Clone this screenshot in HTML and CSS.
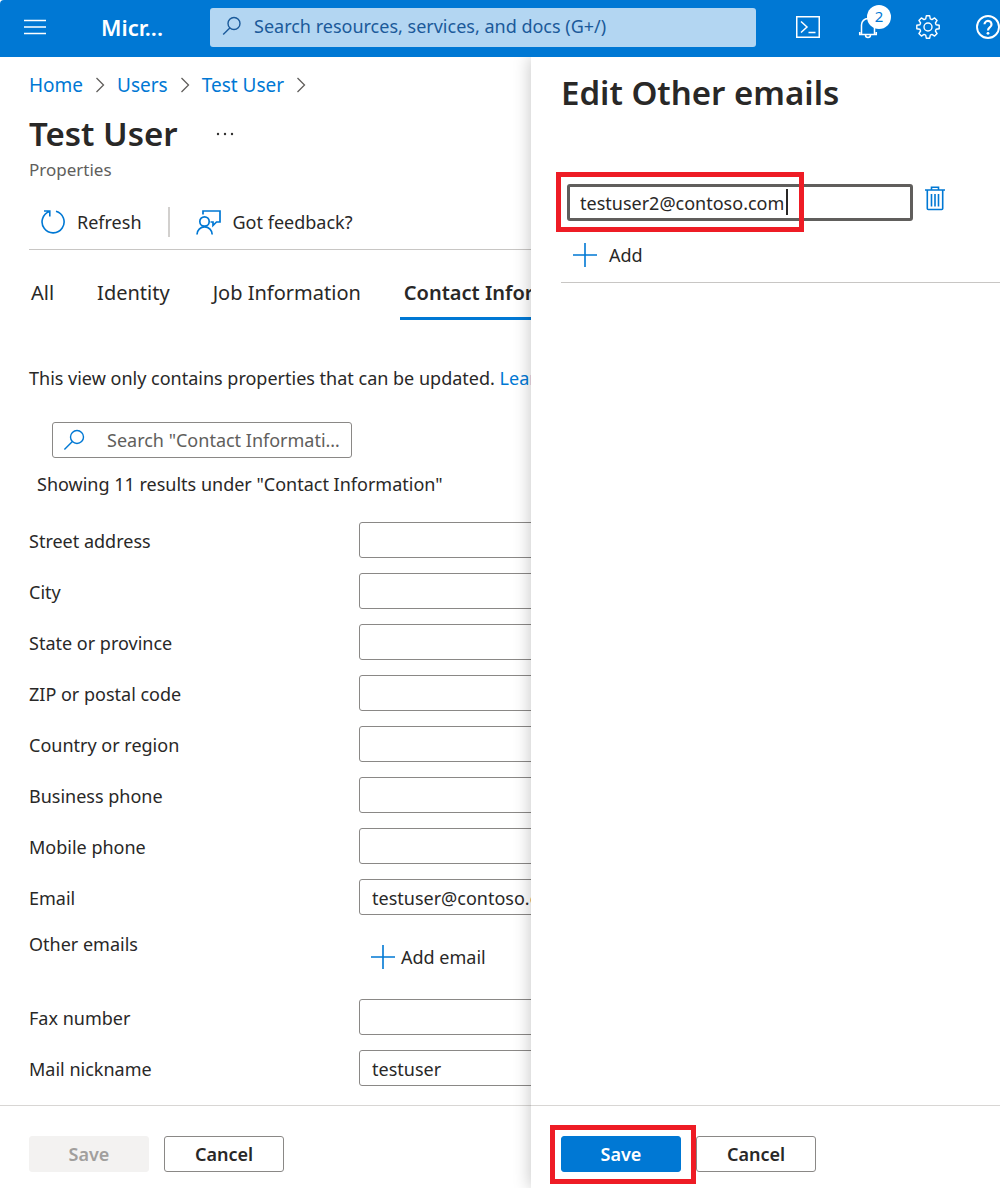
FILE: index.html
```html
<!DOCTYPE html>
<html lang="en">
<head>
<meta charset="utf-8">
<meta name="viewport" content="width=device-width, initial-scale=1">
<title>Test User - Properties</title>
<link rel="stylesheet" href="styles.css">
</head>
<body>
<header class="topbar">
  <button class="icon-btn" type="button" aria-label="Show portal menu">
    <svg width="22" height="16" viewBox="0 0 22 16"><path d="M0 1.5h22M0 8h22M0 14.5h22" stroke="#fff" stroke-width="1.6"/></svg>
  </button>
  <a class="brand" href="#">Micr...</a>
  <div class="global-search">
    <svg width="20" height="20" viewBox="0 0 20 20" fill="none" stroke="#1b5a9a" stroke-width="1.4"><circle cx="12" cy="7.500" r="6"/><path d="M7.800 12 1.200 18.600"/></svg>
    <input type="text" aria-label="Search" placeholder="Search resources, services, and docs (G+/)">
  </div>
  <nav class="top-actions" aria-label="Portal tools">
    <button class="icon-btn" type="button" aria-label="Cloud Shell">
      <svg width="24" height="22" viewBox="0 0 24 22" fill="none" stroke="#fff" stroke-width="1.5"><path d="M.75.75h22.500v20.500H.75z"/><path d="m5 5.500 6 5.500-6 5.500M12.500 16.500h7"/></svg>
    </button>
    <button class="icon-btn bell" type="button" aria-label="Notifications">
      <svg width="24" height="24" viewBox="0 0 24 24" fill="none" stroke="#fff" stroke-width="1.500"><path d="M3 19.500h18M5.500 19.500V10a6.500 6.500 0 0 1 13 0v9.500M9.500 20a2.500 2.500 0 0 0 5 0M3.700 17v2.500M20.300 17v2.500"/></svg>
      <span class="badge">2</span>
    </button>
    <button class="icon-btn" type="button" aria-label="Settings">
      <svg width="24" height="24" viewBox="0 0 24 24" fill="none" stroke="#fff" stroke-width="1.400" stroke-linejoin="round"><path d="M10.300.8h3.400l.6 3 1.700.8 2.600-1.700 2.500 2.500-1.700 2.600.7 1.700 3.100.6v3.400l-3.100.6-.7 1.700 1.700 2.600-2.500 2.500-2.600-1.700-1.700.8-.6 3h-3.400l-.6-3-1.700-.8-2.600 1.700-2.500-2.500 1.700-2.600-.7-1.700-3.100-.6v-3.400l3.100-.6.7-1.700-1.700-2.600 2.500-2.500 2.600 1.700 1.700-.8z"/><circle cx="12" cy="12" r="4"/></svg>
    </button>
    <button class="icon-btn" type="button" aria-label="Help">
      <svg width="24" height="24" viewBox="0 0 24 24" fill="none" stroke="#fff" stroke-width="1.900"><circle cx="12" cy="12" r="11"/><path d="M8.500 9.300a3.500 3.500 0 1 1 5.500 2.900c-1.300.9-2 1.500-2 3.300" stroke-width="2.200"/><circle cx="12" cy="18.300" r="1.400" fill="#fff" stroke="none"/></svg>
    </button>
  </nav>
</header>

<div class="workspace">
  <main class="blade">
    <div class="blade-body">
      <nav class="breadcrumb" aria-label="Breadcrumb">
        <a href="#">Home</a>
        <svg width="10" height="16" viewBox="0 0 10 16"><path d="m1.500 1 7 7-7 7"/></svg>
        <a href="#">Users</a>
        <svg width="10" height="16" viewBox="0 0 10 16"><path d="m1.500 1 7 7-7 7"/></svg>
        <a href="#">Test User</a>
        <svg width="10" height="16" viewBox="0 0 10 16"><path d="m1.500 1 7 7-7 7"/></svg>
      </nav>
      <div class="title-row">
        <h1>Test User</h1>
        <button class="icon-btn" type="button" aria-label="More">
          <svg width="18" height="4" viewBox="0 0 18 4" fill="#323130"><circle cx="2" cy="2" r="1.200"/><circle cx="9" cy="2" r="1.200"/><circle cx="16" cy="2" r="1.200"/></svg>
        </button>
      </div>
      <p class="subtitle">Properties</p>

      <div class="toolbar">
        <button class="command" type="button">
          <svg width="24" height="26" viewBox="0 0 24 26" fill="none" stroke="#0078d4" stroke-width="1.600"><path d="M15 2.300A11 11 0 1 1 8.500 2.500M3 2h5.800v5.500"/></svg>
          Refresh
        </button>
        <span class="divider"></span>
        <button class="command" type="button">
          <svg width="25" height="25" viewBox="0 0 25 25" fill="none" stroke="#0078d4" stroke-width="1.700"><path d="M7 4.500V1h17v11h-3.500L17 15.500V12h-2.500"/><circle cx="8.500" cy="11.500" r="4.700"/><path d="M1 24.500a7.600 7.600 0 0 1 15.200 0"/></svg>
          Got feedback?
        </button>
      </div>

      <nav class="tabs" aria-label="Property groups">
        <a href="#">All</a>
        <a href="#">Identity</a>
        <a href="#">Job Information</a>
        <a href="#" class="active" aria-current="page">Contact Information</a>
      </nav>

      <p class="info">This view only contains properties that can be updated. <a href="#">Learn more</a></p>

      <div class="filter">
        <svg width="22" height="22" viewBox="0 0 22 22" fill="none" stroke="#0078d4" stroke-width="1.400"><circle cx="14" cy="8" r="6.500"/><path d="m9.400 12.600-8 8"/></svg>
        <input type="text" aria-label="Search properties" placeholder="Search &quot;Contact Information&quot;">
      </div>
      <p class="results">Showing 11 results under "Contact Information"</p>

      <form class="fields">
        <div class="field"><label for="street">Street address</label><input id="street" type="text"></div>
        <div class="field"><label for="city">City</label><input id="city" type="text"></div>
        <div class="field"><label for="state">State or province</label><input id="state" type="text"></div>
        <div class="field"><label for="zip">ZIP or postal code</label><input id="zip" type="text"></div>
        <div class="field"><label for="country">Country or region</label><input id="country" type="text"></div>
        <div class="field"><label for="business">Business phone</label><input id="business" type="text"></div>
        <div class="field"><label for="mobile">Mobile phone</label><input id="mobile" type="text"></div>
        <div class="field"><label for="email">Email</label><input id="email" type="text" value="testuser@contoso.com"></div>
        <div class="field tall">
          <label for="add-email">Other emails</label>
          <button class="add-email" id="add-email" type="button">
            <svg width="24" height="24" viewBox="0 0 24 24"><path d="M12 0v24M0 12h24" stroke="#0078d4" stroke-width="1.600"/></svg>
            Add email
          </button>
        </div>
        <div class="field"><label for="fax">Fax number</label><input id="fax" type="text"></div>
        <div class="field"><label for="nickname">Mail nickname</label><input id="nickname" type="text" value="testuser"></div>
      </form>
    </div>
    <footer class="actions">
      <button class="btn" type="button" disabled>Save</button>
      <button class="btn" type="button">Cancel</button>
    </footer>
  </main>

  <aside class="panel">
    <div class="panel-body">
      <h2>Edit Other emails</h2>
      <div class="email-row">
        <div class="email-box">
          <input type="text" aria-label="Other email" value="testuser2@contoso.com">
          <span class="caret"></span>
          <span class="mark mark-email"></span>
        </div>
        <button class="icon-btn" type="button" aria-label="Delete">
          <svg width="20" height="25" viewBox="0 0 20 25" fill="none" stroke="#0078d4" stroke-width="1.600"><path d="M0 4h20M6.500 4V1.200h7V4M2.300 4v18.500q0 1 1 1h13.400q1 0 1-1V4M6.500 8v12.500M10 8v12.500M13.500 8v12.500"/></svg>
        </button>
      </div>
      <div class="add-row">
        <button class="add" type="button">
          <svg width="24" height="24" viewBox="0 0 24 24"><path d="M12 0v24M0 12h24" stroke="#0078d4" stroke-width="1.600"/></svg>
          Add
        </button>
      </div>
    </div>
    <footer class="actions">
      <span class="save-box">
        <button class="btn primary" type="button">Save</button>
        <span class="mark mark-save"></span>
      </span>
      <button class="btn" type="button">Cancel</button>
    </footer>
  </aside>
</div>
</body>
</html>
```
FILE: styles.css
```css
* {
  box-sizing: border-box;
}

body {
  margin: 0;
  min-height: 100vh;
  display: flex;
  flex-direction: column;
  background: #fff;
  color: #292827;
  font: 18px/28px "Noto Sans", "Open Sans", sans-serif;
}

h1,
h2,
p {
  margin: 0;
}

a {
  color: #0078d4;
  text-decoration: none;
}

button,
input {
  font: inherit;
  color: inherit;
}

button {
  padding: 0;
  border: 0;
  background: none;
  white-space: nowrap;
}

svg {
  display: block;
  flex: none;
}

.icon-btn {
  display: flex;
  align-items: center;
  justify-content: center;
  flex: none;
}

/* Top bar */
.topbar {
  display: flex;
  align-items: center;
  height: 57px;
  padding: 0 0 3px 24px;
  background: #0078d4;
  border-top-left-radius: 4px;
}

.brand {
  width: 109px;
  padding-left: 55px;
  box-sizing: content-box;
  color: #fff;
  font-size: 22px;
  font-weight: 600;
}

.global-search {
  flex: 1;
  display: flex;
  align-items: center;
  gap: 12px;
  height: 39px;
  margin-right: 40px;
  padding: 0 12px 2px;
  border-radius: 3px;
  background: #b3d6f2;
  color: #1b5a9a;
}

.global-search input,
.filter input {
  flex: 1;
  min-width: 0;
  padding: 0;
  border: 0;
  outline: 0;
  background: none;
  text-overflow: ellipsis;
}

.global-search input::placeholder {
  color: #1b5a9a;
  opacity: 1;
}

.top-actions {
  display: flex;
  align-items: center;
  gap: 36px;
}

.bell {
  position: relative;
}

.badge {
  position: absolute;
  left: 11px;
  top: -10px;
  width: 24px;
  height: 24px;
  border-radius: 50%;
  background: #fff;
  color: #0078d4;
  font-size: 15px;
  line-height: 23px;
  text-align: center;
}

/* Split between the page and the side panel */
.workspace {
  flex: 1;
  display: grid;
  grid-template-columns: 531fr 469fr;
}

.blade,
.panel {
  display: flex;
  flex-direction: column;
  min-width: 0;
}

.blade {
  overflow: hidden;
}

.blade-body {
  flex: 1;
  padding: 14px 0 19px 29px;
  white-space: nowrap;
}

.breadcrumb {
  display: flex;
  align-items: center;
  gap: 12px;
}

.breadcrumb a {
  font-size: 19px;
}

.breadcrumb path {
  fill: none;
  stroke: #605e5c;
  stroke-width: 1.3;
}

.title-row {
  display: flex;
  align-items: center;
  gap: 38px;
  margin-top: 11px;
}

h1,
h2 {
  font-size: 33px;
  font-weight: 600;
  line-height: 48px;
}

.subtitle {
  color: #605e5c;
  font-size: 17px;
  line-height: 24px;
}

.toolbar {
  display: flex;
  align-items: center;
  gap: 26px;
  height: 55px;
  margin-top: 13px;
  padding-left: 12px;
  border-bottom: 1px solid #c8c6c4;
}

.command,
.add,
.add-email {
  display: flex;
  align-items: center;
  gap: 12px;
}

.divider {
  width: 2px;
  height: 30px;
  background: #d2d0ce;
}

.tabs {
  display: flex;
  gap: 35px;
  margin-top: 20px;
  font-size: 20px;
}

.tabs a {
  flex: none;
  padding: 9px 4px 10px;
  border-bottom: 3px solid transparent;
  color: inherit;
}

.tabs a:first-child {
  padding-left: 2px;
}

.tabs .active {
  border-color: #0078d4;
  font-weight: 600;
}

.info {
  margin-top: 44px;
}

.filter {
  display: flex;
  align-items: center;
  gap: 22px;
  width: 300px;
  height: 36px;
  margin: 30px 0 12px 23px;
  padding: 0 8px 0 10px;
  border: 1px solid #8a8886;
  border-radius: 3px;
}

.filter input::placeholder {
  color: #605e5c;
  opacity: 1;
}

.results {
  padding-left: 8px;
}

.fields {
  display: flex;
  flex-direction: column;
  gap: 15px;
  margin-top: 24px;
}

.field {
  display: grid;
  grid-template-columns: 330px 360px;
  align-items: center;
  height: 36px;
}

.field label {
  padding-top: 2px;
}

.field input {
  height: 36px;
  padding: 2px 12px 0;
  border: 1px solid #8a8886;
  border-radius: 3px;
  background: #fff;
}

.field.tall {
  height: 54px;
}

.tall label {
  align-self: start;
  padding-top: 0;
}

.add-email {
  gap: 6px;
  padding-left: 12px;
}

/* Command footers */
.actions {
  display: flex;
  gap: 15px;
  padding: 30px 29px 16px;
  border-top: 1px solid #d8d6d4;
}

.btn {
  width: 120px;
  height: 36px;
  border: 1px solid #8a8886;
  border-radius: 3px;
  font-weight: 600;
}

.btn:disabled {
  border-color: #f3f2f1;
  background: #f3f2f1;
  color: #a19f9d;
}

.btn.primary {
  border-color: #0078d4;
  background: #0078d4;
  color: #fff;
}

/* Side panel */
.panel {
  z-index: 1;
  background: #fff;
  box-shadow: -1px 0 16px rgba(0, 0, 0, 0.22);
  clip-path: inset(0 0 0 -30px);
}

.panel .actions {
  padding-left: 30px;
}

.panel-body {
  flex: 1;
  padding: 12px 0 0 30px;
}

.email-row {
  display: flex;
  align-items: flex-start;
  gap: 12px;
  margin-top: 67px;
  padding: 0 55px 0 6px;
}

.email-box {
  position: relative;
  flex: 1;
}

.email-box input {
  display: block;
  width: 100%;
  height: 37px;
  padding: 0 10px;
  border: 3px solid #605e5c;
  border-radius: 3px;
  outline: 0;
}

.email-row .icon-btn {
  padding-top: 2px;
}

.caret {
  position: absolute;
  left: 219px;
  top: 5px;
  width: 2px;
  height: 26px;
  background: #292827;
}

.add-row {
  margin-top: 20px;
  padding: 0 0 13px 12px;
  border-bottom: 1px solid #c8c6c4;
}

/* Red callouts drawn over the controls */
.mark {
  position: absolute;
  border: 5px solid #ee1c25;
  pointer-events: none;
}

.mark-email {
  left: -11px;
  top: -12px;
  width: 248px;
  height: 60px;
}

.save-box {
  position: relative;
}

.mark-save {
  left: -11px;
  top: -11px;
  width: 146px;
  height: 59px;
  z-index: 1;
}
```
